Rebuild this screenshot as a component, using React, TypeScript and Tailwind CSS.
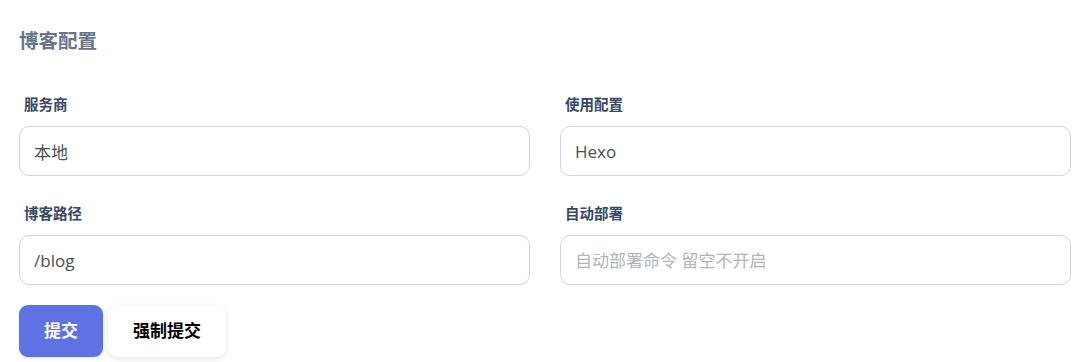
const fields = [
  { label: "服务商", value: "本地", placeholder: "" },
  { label: "使用配置", value: "Hexo", placeholder: "" },
  { label: "博客路径", value: "/blog", placeholder: "" },
  { label: "自动部署", value: "", placeholder: "自动部署命令 留空不开启" },
];

export default function App() {
  return (
    <div
      className="w-[1085px] h-[362px] bg-white overflow-hidden pl-[19px] pr-[14px]"
      style={{ fontFamily: '"Open Sans", "Noto Sans CJK SC", sans-serif' }}
    >
      {/* Title */}
      <h2 className="pt-[29px] h-[92px] text-[19.5px] font-bold leading-[24px] text-[#67748e]">
        博客配置
      </h2>

      {/* Fields */}
      <div className="grid grid-cols-2 gap-x-[30px] gap-y-[25px]">
        {fields.map((f) => (
          <div key={f.label}>
            <label className="block pl-[5px] h-[34px] pt-[3px] text-[14.5px] font-bold leading-[20px] text-[#344767]">
              {f.label}
            </label>
            <input
              readOnly
              value={f.value}
              placeholder={f.placeholder}
              className="w-full h-[50px] px-[14px] rounded-[10px] border border-[#d2d6da] bg-white text-[17px] text-[#495057] placeholder:text-[#adb5bd] outline-none"
            />
          </div>
        ))}
      </div>

      {/* Buttons */}
      <div className="flex gap-[5px] mt-[20px]">
        <button className="w-[84px] h-[52px] rounded-[9px] bg-[#5e72e4] text-white text-[17px] font-bold shadow-sm">
          提交
        </button>
        <button className="w-[118px] h-[52px] rounded-[9px] bg-white text-black text-[17px] font-bold shadow-[0_2px_6px_rgba(0,0,0,0.1)]">
          强制提交
        </button>
      </div>
    </div>
  );
}
